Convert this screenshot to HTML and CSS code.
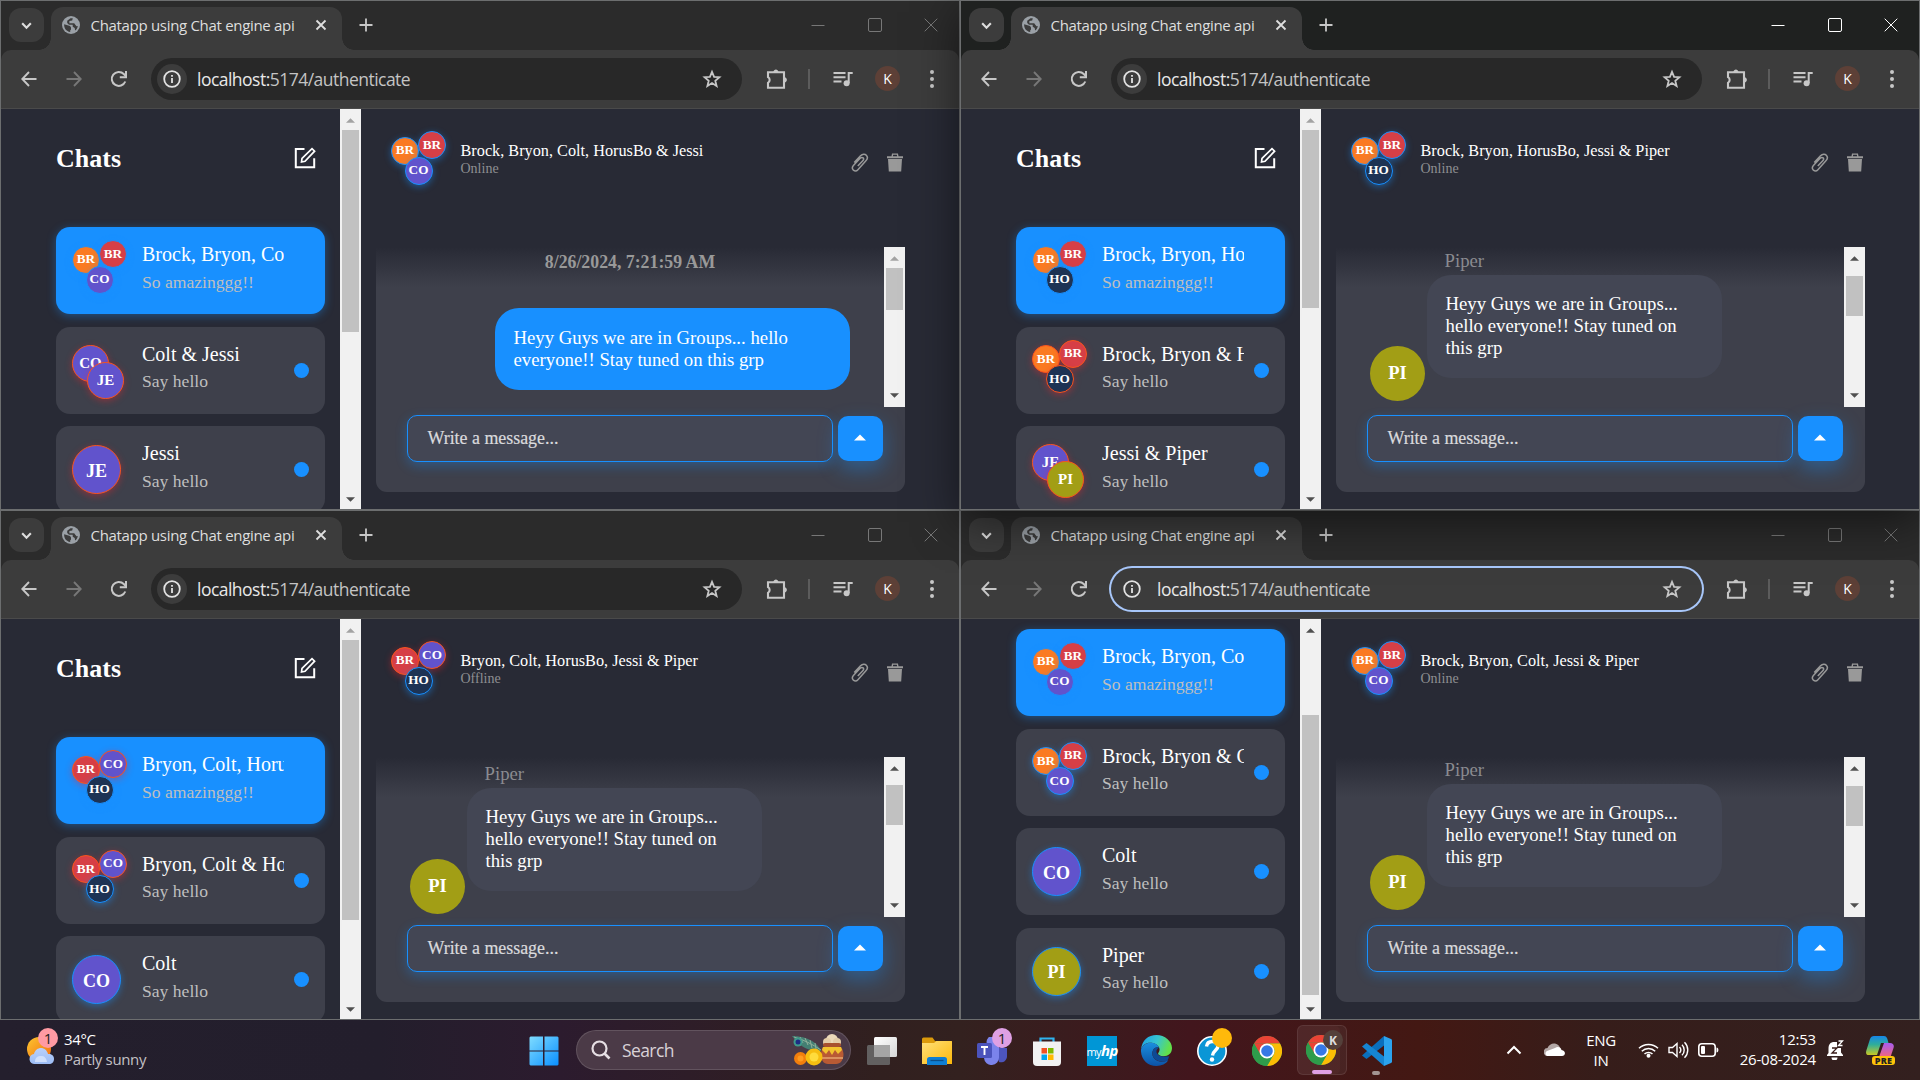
FILE: index.html
```html
<!DOCTYPE html>
<html lang="en">
<head>
<meta charset="utf-8">
<title>Desktop</title>
<link rel="stylesheet" href="styles.css">
</head>
<body>
<svg class="sprite" aria-hidden="true">
  <symbol id="i-chevron-down" viewBox="0 0 12 12"><path d="M2 4l4 4 4-4" fill="none" stroke="currentColor" stroke-width="2"/></symbol>
  <symbol id="i-globe" viewBox="0 0 18 18"><circle cx="9" cy="9" r="9" fill="#9aa0a6"/><path d="M2.2 8.2l5 1.5c1.2.4 1.8 1.2 1.8 2.3v1.2c0 .6-.8.8-.8 1.5v1.2C4.300 15.500 1.800 12 2.200 8.200zM8.500 2.200c.8 0 1.500-.1 2.300.1l-.6 2.200-2.800.5v2.200h4.800l1.300 1.800 1 1.300 1.300-.4c-.3 2-1.300 3.500-2.700 4.600l-.4-2.400-2-1.300V8.700H7L5.200 7V4.800z" fill="#3c3c3c"/></symbol>
  <symbol id="i-close" viewBox="0 0 12 12"><path d="M1.500 1.500l9 9m0-9l-9 9" stroke="currentColor" stroke-width="1.800"/></symbol>
  <symbol id="i-plus" viewBox="0 0 14 14"><path d="M7 .5v13M.5 7h13" stroke="currentColor" stroke-width="1.800"/></symbol>
  <symbol id="i-min" viewBox="0 0 14 14"><path d="M.5 7.500h13" stroke="currentColor"/></symbol>
  <symbol id="i-max" viewBox="0 0 14 14"><rect x=".5" y=".5" width="13" height="13" rx="1.500" fill="none" stroke="currentColor"/></symbol>
  <symbol id="i-x" viewBox="0 0 14 14"><path d="M.7 .7l12.600 12.600m0-12.600L.7 13.300" stroke="currentColor"/></symbol>
  <symbol id="i-back" viewBox="0 0 16 16"><path d="M8 1L1.300 8 8 15M1.300 8H15.500" fill="none" stroke="currentColor" stroke-width="1.900"/></symbol>
  <symbol id="i-forward" viewBox="0 0 16 16"><path d="M8 1l6.700 7L8 15M14.700 8H.5" fill="none" stroke="currentColor" stroke-width="1.900"/></symbol>
  <symbol id="i-reload" viewBox="0 0 18 18"><path d="M15.300 11.500A7 7 0 1 1 13.800 4l2 2.200" fill="none" stroke="currentColor" stroke-width="2"/><path d="M16 1v6.200H9.800" fill="none" stroke="currentColor" stroke-width="2"/></symbol>
  <symbol id="i-info" viewBox="0 0 18 18"><circle cx="9" cy="9" r="7.800" fill="none" stroke="currentColor" stroke-width="1.800"/><path d="M9 8v5M9 5v1.800" stroke="currentColor" stroke-width="1.800"/></symbol>
  <symbol id="i-star" viewBox="0 0 20 20"><path d="M10 2.800l2.100 5 5.300.4-4.100 3.500 1.300 5.300-4.600-2.900-4.600 2.900 1.300-5.300-4.100-3.500 5.300-.4z" fill="none" stroke="currentColor" stroke-width="1.800"/></symbol>
  <symbol id="i-puzzle" viewBox="0 0 22 22"><path d="M2 4.200h16v15.600H2v-5a3.200 3.200 0 0 0 0-5.600z" fill="none" stroke="currentColor" stroke-width="2.100"/><path d="M7.300 4c.4-3.400 4.800-3.400 5.200 0zM18.500 9.300c3.200.4 3.200 4.800 0 5.200z" fill="currentColor"/></symbol>
  <symbol id="i-queue" viewBox="0 0 20 16"><path d="M.5 2h12M.5 6.200h12M.5 10.400h8M15.700 12V2h4" fill="none" stroke="currentColor" stroke-width="2"/><circle cx="13.600" cy="12.200" r="3" fill="currentColor"/></symbol>
  <symbol id="i-dots" viewBox="0 0 4 18"><circle cx="2" cy="2" r="2" fill="currentColor"/><circle cx="2" cy="9" r="2" fill="currentColor"/><circle cx="2" cy="16" r="2" fill="currentColor"/></symbol>
  <symbol id="i-edit" viewBox="0 0 22 22"><path d="M10.500 2H1.800v18.200h18.400v-9" fill="none" stroke="currentColor" stroke-width="2"/><path d="M7.500 15l.5-3.600L18 1.600l2.600 2.600L11 14.300z" fill="none" stroke="currentColor" stroke-width="1.700"/></symbol>
  <symbol id="i-clip" viewBox="0 0 18 20"><path d="M3.200 9.500l6.300-6.700c2-2 4.500-2 5.800-.6 1.400 1.500 1.300 3.800-.4 5.600l-8 8.900c-1.200 1.400-3.200 1.500-4.500.4-1.300-1.200-1.200-3.100 0-4.500l7-7.500c.8-.8 2-.9 2.700-.2.700.7.6 1.700-.1 2.500l-5.200 5.700" fill="none" stroke="currentColor" stroke-width="1.500"/></symbol>
  <symbol id="i-trash" viewBox="0 0 18 19"><path d="M1 3.300h4.500L6 .5h6l.5 2.800H17V5.300H1zM7.200 1.800l-.3 1.500h4.200l-.3-1.500zM2 6h14l-.8 12.500H2.800z" fill="currentColor" fill-rule="evenodd"/></symbol>
  <symbol id="i-up" viewBox="0 0 10 5"><path d="M5 0l5 5H0z" fill="currentColor"/></symbol>
  <symbol id="i-down" viewBox="0 0 10 5"><path d="M0 0h10L5 5z" fill="currentColor"/></symbol>
  <symbol id="i-chrome" viewBox="0 0 30 30"><circle cx="15" cy="15" r="15" fill="#34a853"/><path d="M2 7.500A15 15 0 0 1 28 7.500H15z" fill="#ea4335"/><path d="M28 7.500A15 15 0 0 1 15 30l6.500-11.200A7.500 7.500 0 0 0 15 7.500z" fill="#fbbc05"/><path d="M2 7.500l6.500 11.300L15 7.500z" fill="#ea4335"/><path d="M2 7.500A15 15 0 0 0 15 30l6.500-11.200H8.500z" fill="#2e9c4b"/><circle cx="15" cy="15" r="7.500" fill="#fff"/><circle cx="15" cy="15" r="5.800" fill="#3578e5"/></symbol>
</svg>

<main class="windows" id="windows"></main>

<footer class="taskbar">
  <section class="weather">
    <span class="weather-icon">
      <svg width="30" height="30" viewBox="0 0 30 30"><defs><linearGradient id="sun" x1="0" y1="0" x2="1" y2="1"><stop offset="0" stop-color="#fcc630"/><stop offset="1" stop-color="#f26a0f"/></linearGradient><linearGradient id="cloud" x1="0" y1="0" x2="0" y2="1"><stop offset="0" stop-color="#b9d0fb"/><stop offset="1" stop-color="#9dbdf5"/></linearGradient></defs><circle cx="12" cy="13" r="12" fill="url(#sun)"/><path d="M8 28a5 5 0 0 1-1-10c1-4 4-6 7-6s6 2 7 6c4-.5 6 2 6 5s-2 5-5 5z" fill="url(#cloud)"/><path d="M8 26c0-5 3-6 6-6s5 1 6 6z" fill="#cfdffc"/></svg>
      <i class="badge pink">1</i>
    </span>
    <div class="weather-text"><div>34°C</div><div class="dim">Partly sunny</div></div>
  </section>
  <div class="task"><svg width="30" height="30" viewBox="0 0 30 30"><defs><linearGradient id="win" x1="0" y1="0" x2="1" y2="1"><stop offset="0" stop-color="#7fdcff"/><stop offset="1" stop-color="#0a8fff"/></linearGradient></defs><path d="M1.500.5H14v14H.5v-13zM15.500.5h13l1 1v13h-14zM.5 15.500H14v14H1.500l-1-1zM15.500 15.500h14v13l-1 1h-13z" fill="url(#win)"/></svg></div>
  <div class="search">
    <svg width="20" height="20" viewBox="0 0 20 20"><circle cx="8.500" cy="8.500" r="7" fill="none" stroke="#e6dfe4" stroke-width="2.200"/><path d="M13.500 13.500l5 5" stroke="#e6dfe4" stroke-width="2.600"/></svg>
    <span>Search</span>
    <svg class="festival" width="54" height="32" viewBox="0 0 54 32"><path d="M2 2c9 0 24 3 29 15-8 0-18-2-24-9z" fill="#447f73"/><path d="M4 3c10 3 18 7 27 13M10 3l3 6M15 4l3 7M20 6l2 8M25 9l1 6" stroke="#8fb09a" stroke-width="1" fill="none"/><circle cx="8" cy="8" r="4.500" fill="#3f9a8b"/><circle cx="8" cy="8" r="2.500" fill="#1d2d83"/><circle cx="42" cy="6" r="6" fill="#ecd9ba"/><circle cx="37" cy="8" r="4" fill="#e3cca8"/><circle cx="47" cy="8" r="4" fill="#e3cca8"/><rect x="33" y="9" width="18" height="4" rx="2" fill="#a8512e"/><path d="M33 13h18c5 7 2 17-5 17h-8c-7 0-9-10-5-17z" fill="#b95a34"/><path d="M33 13h18l1 3-4 4-3-4-3 5-3-5-3 4-4-4z" fill="#f3c32e"/><path d="M32 24h21" stroke="#e7a66e" stroke-width="1.500"/><circle cx="10.500" cy="24.500" r="6.500" fill="#f27e0c"/><circle cx="10.500" cy="24.500" r="3" fill="#ff9a1f"/><circle cx="24" cy="23" r="8.500" fill="#f6bd10"/><circle cx="24" cy="23" r="4.500" fill="#ffdc3c"/></svg>
  </div>
  <div class="task gap"><svg width="30" height="28" viewBox="0 0 30 28"><defs><linearGradient id="tv" x1="0" y1="0" x2="1" y2="1"><stop offset="0" stop-color="#fff"/><stop offset="1" stop-color="#d6d6d6"/></linearGradient></defs><rect x="7" width="23" height="20" rx="1.500" fill="url(#tv)"/><rect y="8" width="23" height="20" rx="1.500" fill="#666" opacity=".92"/><path d="M7 8h16v12H7z" fill="#a5a5a5"/></svg></div>
  <div class="task"><svg width="30" height="28" viewBox="0 0 30 28"><defs><linearGradient id="fold" x1="0" y1="0" x2="1" y2="1"><stop offset="0" stop-color="#ffe07a"/><stop offset="1" stop-color="#fdb90b"/></linearGradient></defs><path d="M0 2a1.500 1.500 0 0 1 1.500-1.500h9L13 4H30v10H0z" fill="#dc9a0b"/><path d="M0 6h12l2.500-2H29a1 1 0 0 1 1 1v22H0z" fill="url(#fold)"/><path d="M5 28v-5.500a2.500 2.500 0 0 1 2.500-2.500h15a2.500 2.500 0 0 1 2.500 2.500V28z" fill="#0f7fd4"/><path d="M8.500 23.500h13" stroke="#0b4f8a" stroke-width="1.300"/></svg></div>
  <div class="task"><svg width="30" height="28" viewBox="0 0 30 28"><circle cx="15.500" cy="5" r="6" fill="#7b83eb"/><circle cx="25" cy="7" r="4" fill="#5a62c9"/><path d="M18 11h12v8a6 6 0 0 1-8 6z" fill="#4d55bd"/><path d="M7 9h15v11a7.500 7.500 0 0 1-15 1z" fill="#7b83eb"/><rect x="0" y="6" width="15" height="15" rx="1.500" fill="#4b53bc"/><path d="M4 10h7M7.500 10v8" stroke="#fff" stroke-width="1.900"/></svg><i class="badge lilac">1</i></div>
  <div class="task"><svg width="30" height="30" viewBox="0 0 30 30"><path d="M8.500 7V2.500h13V7" fill="none" stroke="#2eb3ee" stroke-width="2.200"/><path d="M1 5.500h28V26a4 4 0 0 1-4 4H5a4 4 0 0 1-4-4z" fill="#f2f2f2"/><path d="M9.500 12H15v5.500H9.500z" fill="#f25022"/><path d="M16 12h5.500v5.500H16z" fill="#7fba00"/><path d="M9.500 18.500H15V24H9.500z" fill="#00a4ef"/><path d="M16 18.500h5.500V24H16z" fill="#ffb900"/></svg></div>
  <div class="task"><span class="myhp">my<b>hp</b></span></div>
  <div class="task"><svg width="31" height="31" viewBox="0 0 30 30"><defs><linearGradient id="eg" x1="0" y1="0" x2="1" y2=".3"><stop offset="0" stop-color="#1a9fe8"/><stop offset=".55" stop-color="#37c5d0"/><stop offset="1" stop-color="#62e04c"/></linearGradient><linearGradient id="eb" x1="0" y1="0" x2="0" y2="1"><stop offset="0" stop-color="#1a8ede"/><stop offset="1" stop-color="#0c52a6"/></linearGradient></defs><path d="M0 14C1 5 7 0 15 0s15 6 15 12.500c0 5-3.500 8-8.500 8-3 0-5-1-5-2.500 0-1 1.500-1.500 1.500-4C18 10 13 7.500 9 7.500 4.500 7.500 1.500 10 0 14z" fill="url(#eg)"/><path d="M0 14c1.500-4 5-6.500 9-6.500 4 0 7.500 2 8.500 4.500-4-1-6.500 2-6.500 6 0 6 7 10 15.500 6.500C24 28 20 30 15 30 6 30-.5 23 0 14z" fill="url(#eb)"/><path d="M11 18c0-4 2.500-7 6.500-6-2 1-4 4-1 7 3 2.500 8 2 11 1.500-1 1.500-1 2.500-2 4.500-7 2.500-14.500-1-14.500-7z" fill="#0e4a94"/></svg></div>
  <div class="task"><svg width="30" height="30" viewBox="0 0 30 30"><circle cx="15" cy="15" r="14.200" fill="#0a96d6" stroke="#fff" stroke-width="1.600"/><path d="M9.500 10.500c.5-4 3-5 6-5s5.500 1.500 5.500 4.500c0 4-5 4.500-5.500 9.500" fill="none" stroke="#fff" stroke-width="3.400"/><circle cx="15" cy="23.500" r="2.200" fill="#fff"/></svg><i class="badge gold"></i></div>
  <div class="task"><svg width="30" height="30"><use href="#i-chrome"/></svg></div>
  <div class="task running"><svg width="30" height="30"><use href="#i-chrome"/></svg><i class="badge brown">K</i><i class="mark wide"></i></div>
  <div class="task"><svg width="30" height="30" viewBox="0 0 30 30"><path d="M22 0v9.500L4.500 23 0 19.500 22 0z" fill="#0a6fbd"/><path d="M0 10.500L4.500 7 22 20.500V30z" fill="#1685d2"/><path d="M22 0l7 3a2 2 0 0 1 1 1.500v21a2 2 0 0 1-1 1.500l-7 3z" fill="#2ba3ee"/></svg><i class="mark"></i></div>
  <section class="tray">
    <svg class="t-chev" width="16" height="10" viewBox="0 0 16 10"><path d="M1.500 8.500L8 2l6.500 6.500" fill="none" stroke="#fff" stroke-width="2"/></svg>
    <svg class="t-cloud" width="21" height="14" viewBox="0 0 21 14"><path d="M4 13a4 4 0 0 1-.5-8C5 1.500 8 0 11 .5c3 .5 4.500 2.500 5 4.500z" fill="#b3a7a6"/><path d="M3 13c-2-1-2-4 0-5l8-3c3-2 6-.5 6.500 2 5 1 4 6 .5 6z" fill="#fff"/></svg>
    <div class="t-lang">ENG<br>IN</div>
    <svg class="t-wifi" width="21" height="16" viewBox="0 0 21 16"><g fill="none" stroke="#fff" stroke-width="1.500"><path d="M1 6.300a13.500 13.500 0 0 1 19 0"/><path d="M3.800 9.200a9.500 9.500 0 0 1 13.400 0"/><path d="M6.500 12a5.800 5.800 0 0 1 8 0"/></g><circle cx="10.500" cy="13.800" r="2" fill="#fff"/></svg>
    <svg class="t-vol" width="21" height="18" viewBox="0 0 21 18"><g fill="none" stroke="#fff" stroke-width="1.400"><path d="M1 6.500h3.500L9 2.500v13l-4.500-4H1z"/><path d="M11.500 6a4.500 4.500 0 0 1 0 6M14 3.700a7.500 7.500 0 0 1 0 10.600M16.500 1.200a11 11 0 0 1 0 15.600"/></g></svg>
    <svg class="t-bat" width="21" height="14" viewBox="0 0 21 14"><rect x=".8" y=".8" width="16.400" height="12.400" rx="3" fill="none" stroke="#fff" stroke-width="1.600"/><rect x="3" y="3" width="4" height="8" rx="1" fill="#fff"/><path d="M18.500 4.500c2.500 0 2.500 5 0 5z" fill="#fff"/></svg>
    <div class="t-clock">12:53<br>26-08-2024</div>
    <svg class="t-bell" width="18" height="20" viewBox="0 0 18 20"><path d="M1 16v-1l1.500-2V8.500C2.500 4 5 2 8 2h3v6h4v4.500L17 15v1zM5.500 17.500h6a3 3 0 0 1-6 0z" fill="#fff"/><path d="M6 8h5l-5 5h5" fill="none" stroke="#3a1d1a" stroke-width="1.300"/><path d="M12.500 1h4L12.500 5.500h4" fill="none" stroke="#fff" stroke-width="1.300"/></svg>
    <span class="t-copilot"><svg width="28" height="28" viewBox="0 0 28 28"><defs><linearGradient id="ca" x1="0" y1="0" x2="0" y2="1"><stop offset="0" stop-color="#1686e8"/><stop offset=".45" stop-color="#2fae9a"/><stop offset="1" stop-color="#c9c923"/></linearGradient><linearGradient id="cb" x1="0" y1="0" x2="0" y2="1"><stop offset="0" stop-color="#a65cf0"/><stop offset="1" stop-color="#f2667c"/></linearGradient></defs><path d="M8 0h10c3 0 3.500 3 4.500 7H15l-4 12H3c-3 0-3.500-2-2.500-5L4 3c.8-2 2-3 4-3z" fill="url(#ca)"/><path d="M18 7h6c3 0 4.500 2 3.500 5l-3 9H13z" fill="url(#cb)"/></svg><i>PRE</i></span>
  </section>
</footer>
<script src="app.js"></script>
</body>
</html>
```

FILE: styles.css
```css
* { box-sizing: border-box; }
body {
  margin: 0;
  width: 1920px;
  height: 1080px;
  overflow: hidden;
  background: #241f2d;
  font-family: "Liberation Serif", "Times New Roman", serif;
}
i { font-style: normal; }
svg { display: block; flex: none; }
.sprite { position: absolute; width: 0; height: 0; }

/* window grid */
.windows { display: grid; grid-template-columns: 960px 960px; grid-template-rows: 510px 510px; }
.window {
  display: flex;
  flex-direction: column;
  border: 1px solid #6c6e6f;
  background: #282a35;
  color: #c7c7c7;
  overflow: hidden;
}
.window.focused { position: relative; z-index: 1; box-shadow: 0 12px 42px rgba(0, 0, 0, .5); }

.tabstrip {
  display: flex;
  align-items: center;
  height: 49px;
  flex: none;
  padding: 0 21px 1px 8px;
  background: #2b2b2b;
  font-family: "Open Sans", "Noto Sans", sans-serif;
}
.focused .tabstrip { background: #1f2120; }
.tab-search {
  display: grid;
  place-items: center;
  width: 35px;
  height: 34px;
  margin-right: 7px;
  border-radius: 12px;
  background: #3c3c3c;
  color: #dedede;
}
.tab {
  position: relative;
  display: flex;
  align-items: center;
  align-self: flex-end;
  width: 291px;
  height: 43px;
  margin-bottom: -1px;
  padding: 0 15px 8px 11px;
  border-radius: 12px 12px 0 0;
  background: #3c3c3c;
  color: #dedede;
}
.tab::before, .tab::after {
  content: "";
  position: absolute;
  bottom: 0;
  width: 12px;
  height: 12px;
}
.tab::before { left: -12px; background: radial-gradient(circle at 0 0, transparent 11.5px, #3c3c3c 12px); }
.tab::after { right: -12px; background: radial-gradient(circle at 100% 0, transparent 11.5px, #3c3c3c 12px); }
.tab-title { margin-left: 10.500px; font-size: 15px; letter-spacing: -.31px; white-space: nowrap; }
.tab-close { margin-left: auto; }
.new-tab { margin-left: 17px; }
.controls { display: flex; gap: 42.500px; margin-left: auto; color: #777; }
.focused .controls { color: #fff; }

.toolbar-wrap { flex: none; background: #2b2b2b; }
.focused .toolbar-wrap { background: #1f2120; }
.toolbar {
  display: flex;
  align-items: center;
  height: 59px;
  padding: 0 25px 1px 20px;
  border-radius: 10px 10px 0 0;
  border-bottom: 1px solid #4a4a4a;
  background: #3c3c3c;
  font-family: "Open Sans", "Noto Sans", sans-serif;
}
.forward { margin-left: 29px; color: #777; }
.reload { margin: 0 23px 0 28px; }
.omnibox {
  display: flex;
  align-items: center;
  width: 591px;
  height: 42px;
  padding: 0 20px 0 6px;
  border-radius: 21px;
  background: #282828;
}
.omnibox.active { background: transparent; box-shadow: 0 0 0 2px #a8c7fa; }
.site-info {
  display: grid;
  place-items: center;
  width: 30px;
  height: 30px;
  border-radius: 50%;
  background: #3c3c3c;
  color: #e3e3e3;
}
.active .site-info { background: transparent; }
.url { margin-left: 10px; font-size: 17.500px; letter-spacing: -.52px; color: #c4c4c4; white-space: nowrap; }
.url b { font-weight: 400; color: #e8e8e8; }
.star { margin-left: auto; }
.puzzle { margin-left: 24px; }
.sep { width: 2px; height: 20px; margin: 0 23px 0 20px; background: #5c5c5c; }
.profile {
  display: grid;
  place-items: center;
  width: 25px;
  height: 25px;
  margin: 0 30px 0 22px;
  border-radius: 50%;
  background: #5d4037;
  color: #fff;
  font-size: 14px;
}

/* page */
.page { display: flex; height: 400px; overflow: hidden; }
.side { width: 339px; padding-left: 55px; overflow: hidden; }
.side-head { display: flex; justify-content: space-between; width: 260px; height: 118px; padding-top: 35px; }
.side-head h1 { margin: 0; font-size: 26px; line-height: 30px; color: #fff; }
.side-head svg { margin-top: 3px; color: #fff; }
.scrolled .side-head { margin-top: -108px; }
.card {
  display: flex;
  align-items: flex-start;
  width: 269px;
  height: 87px;
  margin-bottom: 12.650px;
  padding: 13px 16px 0;
  border-radius: 14px;
  background: #3e404b;
}
.card.selected { background: #1890ff; box-shadow: 0 2px 10px rgba(24, 144, 255, .4); }
.card-text { width: 142px; margin: 3px 0 0 14px; overflow: hidden; white-space: nowrap; }
.card-name { font-size: 20px; line-height: 23px; color: #fff; }
.card-last { margin-top: 5.500px; font-size: 17.600px; line-height: 20px; color: #bfbfbf; }
.dot { width: 15px; height: 15px; margin: 23px 0 0 10px; border-radius: 50%; background: #1890ff; }

.avatars { position: relative; flex: none; width: 56px; height: 56px; }
.avatar {
  --ring: #1890ff;
  --glow: rgba(24, 144, 255, .45);
  position: absolute;
  display: grid;
  place-items: center;
  border: 1px solid var(--ring);
  border-radius: 50%;
  box-shadow: 0 2px 7px var(--glow);
  color: #fff;
  font-weight: 700;
}
.avatar.off { --ring: #fa541c; --glow: rgba(245, 34, 45, .4); }
.n1 .avatar { width: 49px; height: 49px; top: 6px; font-size: 18px; padding-top: 3px; }
.n2 .avatar { width: 37px; height: 37px; font-size: 15px; }
.n2 .avatar:nth-child(1) { top: 5px; }
.n2 .avatar:nth-child(2) { left: 15px; top: 22px; }
.n3 .avatar { width: 28px; height: 28px; padding-bottom: 1px; font-size: 13.200px; }
.n3 .avatar:nth-child(1) { top: 5.500px; }
.n3 .avatar:nth-child(2) { left: 27px; }
.n3 .avatar:nth-child(3) { left: 13.500px; top: 25.800px; }
.BR1 { background: #fa7a22; }
.BR2 { background: #d63f46; }
.CO, .JE { background: #6153cc; }
.HO { background: #1d3354; }
.PI { background: #a29e15; }

.scrollbar {
  display: flex;
  flex-direction: column;
  align-items: center;
  width: 21px;
  flex: none;
  padding: 9px 0 7px;
  background: #f1f1f1;
  color: #505050;
}
.scrollbar .muted { color: #a3a3a3; }
.thumb { width: 17px; background: #c1c1c1; }
.scrollbar svg:last-child { margin-top: auto; }
.feed .scrollbar { padding-bottom: 9px; }

.chat { flex: 1; }
.chat-head { display: flex; height: 138px; padding: 22px 55px 0 30px; }
.chat-title { margin: 11px 0 0 13.500px; white-space: nowrap; }
.chat-name { font-size: 16.250px; line-height: 18px; color: #fff; }
.chat-state { font-size: 14px; line-height: 17px; color: #8e8f92; }
.chat-tools { display: flex; gap: 17px; margin: 22px 0 0 auto; color: #999; }
.panel {
  width: 529px;
  height: 245px;
  margin-left: 15px;
  border-radius: 0 0 11px 11px;
  background: linear-gradient(rgba(62, 64, 75, 0), #3e404b 40px);
}
.feed { display: flex; height: 160px; }
.messages { flex: 1; height: 160px; padding-top: 5px; overflow: hidden; }
.date { font-size: 17.800px; line-height: 20px; font-weight: 700; text-align: center; color: #999; }
.bubble { border-radius: 24px; font-size: 18.750px; line-height: 22px; color: #fff; }
.bubble.mine { width: 355px; margin: 36px 0 0 119px; padding: 19px 30px 19px 18.500px; background: #1890ff; }
.messages.theirs { padding-top: 3px; }
.sender { margin-left: 108.500px; font-size: 18.750px; line-height: 22px; color: #8a8b90; }
.message { display: flex; align-items: flex-end; gap: 2px; margin-top: 3px; padding-left: 34px; }
.message .bubble { width: 295px; padding: 18px 30px 19px 18.500px; background: #434654; }
.face {
  display: grid;
  place-items: center;
  width: 55px;
  height: 55px;
  margin-bottom: -23px;
  border-radius: 50%;
  color: #fff;
  font-size: 18.500px;
  font-weight: 700;
}
.compose { display: flex; align-items: center; gap: 5px; padding: 8px 0 0 31px; }
.field {
  width: 426px;
  height: 47px;
  padding: 11px 19.500px;
  border: 1px solid #1890ff;
  border-radius: 10px;
  background: #434654;
  box-shadow: 0 4px 12px rgba(24, 144, 255, .32);
  color: #dadadd;
  font-size: 17.900px;
  line-height: 22px;
  -webkit-text-stroke: .2px #dadadd;
}
.send {
  display: grid;
  place-items: center;
  width: 45px;
  height: 45px;
  padding: 0 1px 3px 0;
  border-radius: 10px;
  background: #1890ff;
  box-shadow: 0 8px 20px rgba(24, 144, 255, .38);
  color: #fff;
}

/* taskbar */
.taskbar {
  display: flex;
  align-items: center;
  height: 60px;
  background: linear-gradient(90deg, #241f2d 0, #231e2c 380px, #2c1b2e 560px, #31201f 880px, #33211f 960px, #42161d 1190px, #431813 1420px, #361d1a 1600px, #33201f 1920px);
  color: #fff;
  font-family: "Open Sans", "Noto Sans", sans-serif;
  font-size: 15px;
  letter-spacing: -.35px;
}
.weather { display: flex; align-items: center; width: 516px; padding-left: 27px; line-height: 20px; }
.weather-icon { position: relative; width: 31px; padding-top: 1px; }
.weather-text { margin: -2px 0 0 6px; }
.dim { color: #c4c1c6; }
.badge {
  position: absolute;
  display: grid;
  place-items: center;
  width: 20px;
  height: 20px;
  border-radius: 50%;
  color: #222;
  letter-spacing: 0;
}
.pink { left: 11px; top: -7px; background: #ff9aa3; }
.lilac { right: 7px; background: #dfa0e4; }
.gold { right: 7px; background: #ffb90b; }
.brown { background: #54403a; color: #ddd; font-size: 12px; font-weight: 700; }
.task { position: relative; display: grid; place-items: center; width: 55px; height: 46px; padding-top: 1px; flex: none; }
.task .badge { top: 1px; }
.gap { margin-left: 3px; }
.running { width: 50px; height: 50px; margin: 0 2px 0 3px; padding: 0 3px 0 0; border: 1px solid rgba(255, 255, 255, .08); border-radius: 6px; background: rgba(255, 255, 255, .07); box-shadow: inset -6px 0 0 rgba(0, 0, 0, .08); }
.task.running .badge { top: 4px; right: 3px; }
.mark { position: absolute; bottom: 0; left: 23px; width: 8px; height: 4px; border-radius: 2px; background: #a39492; }
.task:not(.running) .mark { bottom: -2px; }
.mark.wide { left: 14px; width: 20px; background: #dfa0e4; }
.search {
  display: flex;
  align-items: center;
  width: 275px;
  height: 40px;
  margin-left: 5px;
  padding: 0 6px 0 14px;
  border: 1px solid rgba(255, 255, 255, .13);
  border-radius: 20px;
  background: #4b3a47;
  color: #d9d2d7;
  font-size: 17.500px;
  letter-spacing: -.6px;
}
.search span { margin-left: 11px; }
.festival { margin-left: auto; }
.myhp { width: 30px; height: 30px; background: #0096d6; font-size: 11px; line-height: 28px; text-align: center; letter-spacing: -.6px; }
.myhp b { font-style: italic; font-size: 15px; }
.tray { display: flex; align-items: center; flex: 1; height: 60px; line-height: 20px; }
.t-chev { margin-left: 102px; }
.t-cloud { margin-left: 22px; }
.t-lang { width: 50px; margin: -1px 0 0 11px; text-align: center; }
.t-wifi { margin-left: 12px; }
.t-vol { margin-left: 9px; }
.t-bat { margin-left: 9px; }
.t-clock { width: 88px; margin: -2px 0 0 9px; text-align: right; white-space: nowrap; letter-spacing: -.2px; }
.t-bell { margin-left: 10px; }
.t-copilot { position: relative; margin-left: 22px; }
.t-copilot i { position: absolute; left: 6px; bottom: -1px; width: 23px; height: 9px; border-radius: 3px; background: #fdc30a; color: #222; font-size: 9px; line-height: 9px; font-weight: 800; text-align: center; letter-spacing: .2px; }
```

FILE: app.js
```js
const PHRASE = "Heyy Guys we are in Groups...";

const icon = (name, w, h = w, cls = "") =>
  `<svg class="${cls}" width="${w}" height="${h}"><use href="#i-${name}"/></svg>`;

// People are written as CODE or CODE-off; BR1 is Brock and BR2 is Bryon.
const avatars = (people) => `<div class="avatars n${people.length}">${people.map((p) => {
  const [code, off] = p.split("-");
  return `<span class="avatar ${code} ${off || ""}">${code.slice(0, 2)}</span>`;
}).join("")}</div>`;

const scrollbar = ({ start, size, atTop }) => `
  <div class="scrollbar">
    ${icon("up", 9, 5, atTop ? "muted" : "")}
    <div class="thumb" style="height:${size}px;margin-top:${start - 14}px"></div>
    ${icon("down", 9, 5)}
  </div>`;

const card = ({ who, name, last = "Say hello" }, index) => `
  <article class="card ${index === 0 ? "selected" : ""}">
    ${avatars(who)}
    <div class="card-text"><div class="card-name">${name}</div><div class="card-last">${last}</div></div>
    ${index === 0 ? "" : '<span class="dot"></span>'}
  </article>`;

const messages = (w) => w.mine
  ? `<div class="messages"><div class="date">8/26/2024, 7:21:59 AM</div>
       <div class="bubble mine">${PHRASE} hello everyone!! Stay tuned on this grp</div></div>`
  : `<div class="messages theirs" style="padding-top:${w.offset}px"><div class="sender">Piper</div>
       <div class="message"><span class="face PI">PI</span>
       <div class="bubble">${PHRASE}<br>hello everyone!! Stay tuned on<br>this grp</div></div></div>`;

const browser = (w) => `
  <section class="window ${w.focused ? "focused" : ""}">
    <div class="tabstrip">
      <span class="tab-search">${icon("chevron-down", 13)}</span>
      <div class="tab">${icon("globe", 18)}<span class="tab-title">Chatapp using Chat engine api</span>${icon("close", 12, 12, "tab-close")}</div>
      ${icon("plus", 14, 14, "new-tab")}
      <div class="controls">${icon("min", 14)}${icon("max", 14)}${icon("x", 14)}</div>
    </div>
    <div class="toolbar-wrap"><div class="toolbar">
      ${icon("back", 16)}${icon("forward", 16, 16, "forward")}${icon("reload", 18, 18, "reload")}
      <div class="omnibox ${w.typing ? "active" : ""}">
        <span class="site-info">${icon("info", 18)}</span>
        <span class="url"><b>localhost:</b>5174/authenticate</span>
        ${icon("star", 20, 20, "star")}
      </div>
      ${icon("puzzle", 22, 22, "puzzle")}<span class="sep"></span>${icon("queue", 20, 16)}
      <span class="profile">K</span>${icon("dots", 4, 18)}
    </div></div>
    <div class="page ${w.scrolled ? "scrolled" : ""}">
      <div class="side">
        <div class="side-head"><h1>Chats</h1>${icon("edit", 22)}</div>
        ${w.chats.map(card).join("")}
      </div>
      ${scrollbar(w.sideBar)}
      <div class="chat">
        <header class="chat-head">
          ${avatars(w.chats[0].who)}
          <div class="chat-title"><div class="chat-name">${w.title}</div><div class="chat-state">${w.state || "Online"}</div></div>
          <div class="chat-tools">${icon("clip", 18, 20)}${icon("trash", 18, 19)}</div>
        </header>
        <div class="panel">
          <div class="feed">${messages(w)}${scrollbar(w.feedBar)}</div>
          <div class="compose"><div class="field">Write a message...</div><span class="send">${icon("up", 12, 7)}</span></div>
        </div>
      </div>
    </div>
  </section>`;

const last = "So amazinggg!!";
const windows = [
  {
    title: "Brock, Bryon, Colt, HorusBo &amp; Jessi",
    mine: true,
    sideBar: { start: 21, size: 202, atTop: true },
    feedBar: { start: 21, size: 42, atTop: true },
    chats: [
      { who: ["BR1", "BR2", "CO"], name: "Brock, Bryon, Co", last },
      { who: ["CO-off", "JE-off"], name: "Colt &amp; Jessi" },
      { who: ["JE-off"], name: "Jessi" },
    ],
  },
  {
    title: "Brock, Bryon, HorusBo, Jessi &amp; Piper",
    focused: true,
    offset: 3,
    sideBar: { start: 21, size: 178, atTop: true },
    feedBar: { start: 29, size: 40 },
    chats: [
      { who: ["BR1", "BR2", "HO"], name: "Brock, Bryon, Ho", last },
      { who: ["BR1-off", "BR2-off", "HO-off"], name: "Brock, Bryon &amp; H" },
      { who: ["JE-off", "PI-off"], name: "Jessi &amp; Piper" },
    ],
  },
  {
    title: "Bryon, Colt, HorusBo, Jessi &amp; Piper",
    state: "Offline",
    offset: 6,
    sideBar: { start: 21, size: 280, atTop: true },
    feedBar: { start: 28, size: 40 },
    chats: [
      { who: ["BR2-off", "CO-off", "HO"], name: "Bryon, Colt, Horu", last },
      { who: ["BR2-off", "CO-off", "HO"], name: "Bryon, Colt &amp; Ho" },
      { who: ["CO"], name: "Colt" },
    ],
  },
  {
    title: "Brock, Bryon, Colt, Jessi &amp; Piper",
    typing: true,
    scrolled: true,
    offset: 2,
    sideBar: { start: 96, size: 280 },
    feedBar: { start: 29, size: 40 },
    chats: [
      { who: ["BR1", "BR2", "CO"], name: "Brock, Bryon, Co", last },
      { who: ["BR1", "BR2", "CO"], name: "Brock, Bryon &amp; C" },
      { who: ["CO"], name: "Colt" },
      { who: ["PI"], name: "Piper" },
    ],
  },
];

document.getElementById("windows").innerHTML = windows.map(browser).join("");
```
